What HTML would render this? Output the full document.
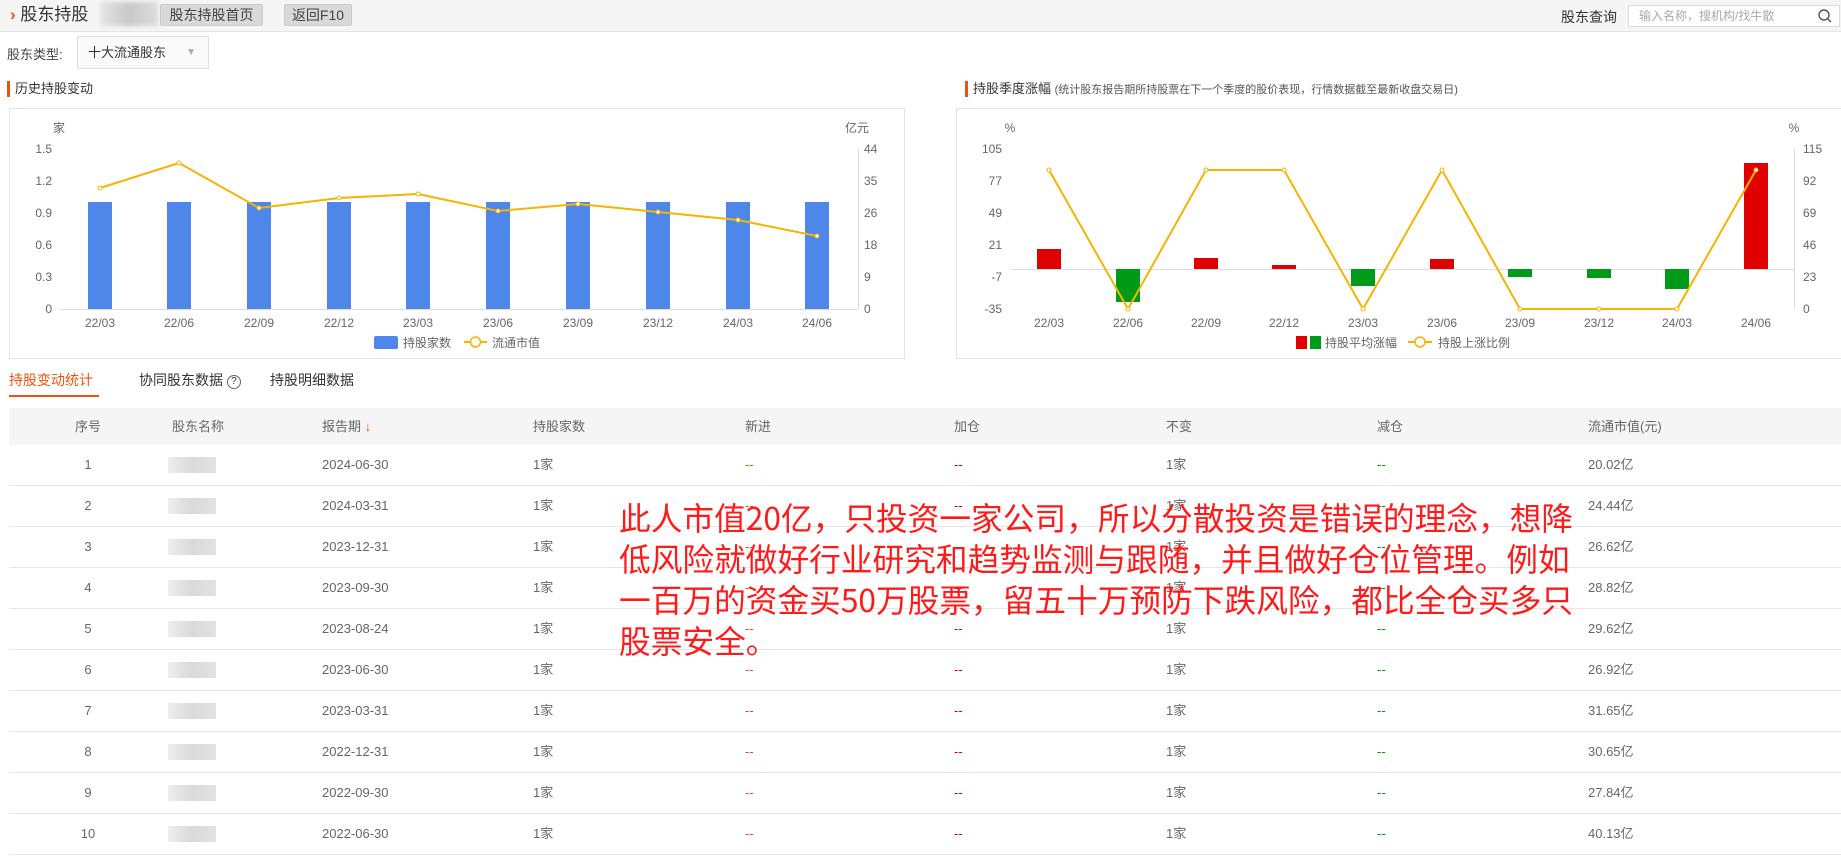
<!DOCTYPE html>
<html><head><meta charset="utf-8"><style>
*{margin:0;padding:0;box-sizing:border-box}
body{width:1841px;height:861px;position:relative;overflow:hidden;background:#fff;font-family:"Liberation Sans","Noto Sans CJK SC",sans-serif;color:#666;font-size:13px}
.a{position:absolute;white-space:nowrap}
.top{position:absolute;left:0;top:0;width:1841px;height:32px;background:#f5f5f5;border-bottom:1px solid #e4e4e4}
.btn{position:absolute;top:4px;height:22px;background:#d9d9d9;border:1px solid #ccc;border-radius:2px;color:#444;font-size:14px;line-height:20px;text-align:center}
.sec{position:absolute;top:81px;height:16px;border-left:3px solid #e8540f;padding-left:5px;font-size:13px;line-height:16px;color:#333}
.box{position:absolute;top:108px;height:251px;border:1px solid #e4e4e4}
.hdr{position:absolute;left:9px;top:408px;width:1832px;height:37px;background:#f5f5f5}
.row{position:absolute;left:9px;width:1832px;height:41px;border-bottom:1px solid #e6e6e6}
.c{position:absolute;font-size:13px;line-height:40px}
.note{position:absolute;left:619px;top:497px;color:#ff1a1a;font-size:31.7px;line-height:41px;font-family:"Noto Sans CJK SC",sans-serif;white-space:nowrap}
</style></head><body>
<div class="top"></div>
<div class="a" style="left:10px;top:5px;font-size:17px;color:#333;line-height:20px"><span style="color:#e8540f;font-weight:bold">›</span> 股东持股</div>
<div class="a" style="left:100px;top:2px;width:58px;height:24px;background:linear-gradient(90deg,#e6e6e6,#c8c8c8,#ddd);filter:blur(2px)"></div>
<div class="btn" style="left:160px;width:103px">股东持股首页</div>
<div class="btn" style="left:284px;width:68px">返回F10</div>
<div class="a" style="left:1561px;top:7px;font-size:14px;color:#333">股东查询</div>
<div class="a" style="left:1628px;top:5px;width:212px;height:22px;border:1px solid #ddd;background:#fff;font-size:12px;color:#aaa;line-height:20px;padding-left:10px">输入名称，搜机构/找牛散</div>
<svg class="a" style="left:1817px;top:8px" width="16" height="16"><circle cx="7" cy="7" r="5" fill="none" stroke="#555" stroke-width="1.4"/><line x1="11" y1="11" x2="14" y2="14" stroke="#555" stroke-width="1.4"/></svg>
<div class="a" style="left:7px;top:44px;font-size:13px;color:#444">股东类型:</div>
<div class="a" style="left:77px;top:36px;width:132px;height:33px;border:1px solid #e0e0e0;background:#fafafa;font-size:13px;color:#333;line-height:31px;padding-left:10px">十大流通股东<span style="position:absolute;right:12px;color:#aaa;font-size:10px">▼</span></div>
<div class="sec" style="left:7px">历史持股变动</div>
<div class="sec" style="left:965px">持股季度涨幅 <span style="font-size:11px;color:#555">(统计股东报告期所持股票在下一个季度的股价表现，行情数据截至最新收盘交易日)</span></div>
<div class="box" style="left:9px;width:896px"></div>
<div class="box" style="left:956px;width:885px;border-right:none"></div>
<svg class="a" style="left:0;top:0" width="1841" height="400" font-family="Liberation Sans,Noto Sans CJK SC,sans-serif" font-size="12" fill="#666">
<line x1="60" y1="309.5" x2="858" y2="309.5" stroke="#ddd"/>
<line x1="858.5" y1="149" x2="858.5" y2="309" stroke="#ddd"/>
<text x="59" y="132" text-anchor="middle">家</text><text x="857" y="132" text-anchor="middle">亿元</text>
<g text-anchor="end"><text x="52" y="153">1.5</text><text x="52" y="185">1.2</text><text x="52" y="217">0.9</text><text x="52" y="249">0.6</text><text x="52" y="281">0.3</text><text x="52" y="313">0</text></g>
<g><text x="864" y="153">44</text><text x="864" y="185">35</text><text x="864" y="217">26</text><text x="864" y="249">18</text><text x="864" y="281">9</text><text x="864" y="313">0</text></g>
<g fill="#4f86ea">
<rect x="88" y="202" width="24" height="107"/><rect x="167" y="202" width="24" height="107"/><rect x="247" y="202" width="24" height="107"/><rect x="327" y="202" width="24" height="107"/><rect x="406" y="202" width="24" height="107"/><rect x="486" y="202" width="24" height="107"/><rect x="566" y="202" width="24" height="107"/><rect x="646" y="202" width="24" height="107"/><rect x="726" y="202" width="24" height="107"/><rect x="805" y="202" width="24" height="107"/></g>
<polyline fill="none" stroke="#f5b400" stroke-width="2" points="100,188 179,163 259,208 339,198 418,194 498,211 578,204 658,212 738,220 817,236"/>
<g fill="#fff" stroke="#f5b400"><circle cx="100" cy="188" r="2"/><circle cx="179" cy="163" r="2"/><circle cx="259" cy="208" r="2"/><circle cx="339" cy="198" r="2"/><circle cx="418" cy="194" r="2"/><circle cx="498" cy="211" r="2"/><circle cx="578" cy="204" r="2"/><circle cx="658" cy="212" r="2"/><circle cx="738" cy="220" r="2"/><circle cx="817" cy="236" r="2"/></g>
<g text-anchor="middle"><text x="100" y="327">22/03</text><text x="179" y="327">22/06</text><text x="259" y="327">22/09</text><text x="339" y="327">22/12</text><text x="418" y="327">23/03</text><text x="498" y="327">23/06</text><text x="578" y="327">23/09</text><text x="658" y="327">23/12</text><text x="738" y="327">24/03</text><text x="817" y="327">24/06</text></g>
<rect x="374" y="336" width="24" height="13" rx="2" fill="#4f86ea"/><text x="403" y="347">持股家数</text>
<line x1="464" y1="342" x2="487" y2="342" stroke="#f5b400" stroke-width="2"/><circle cx="475.5" cy="342" r="5" fill="#fff" stroke="#f5b400" stroke-width="1.5"/><text x="492" y="347">流通市值</text>

<line x1="1011" y1="269.5" x2="1794" y2="269.5" stroke="#ddd"/>
<line x1="1794.5" y1="149" x2="1794.5" y2="309" stroke="#ddd"/>
<text x="1010" y="132" text-anchor="middle">%</text><text x="1794" y="132" text-anchor="middle">%</text>
<g text-anchor="end"><text x="1002" y="153">105</text><text x="1002" y="185">77</text><text x="1002" y="217">49</text><text x="1002" y="249">21</text><text x="1002" y="281">-7</text><text x="1002" y="313">-35</text></g>
<g><text x="1803" y="153">115</text><text x="1803" y="185">92</text><text x="1803" y="217">69</text><text x="1803" y="249">46</text><text x="1803" y="281">23</text><text x="1803" y="313">0</text></g>
<g fill="#e00000"><rect x="1037" y="249" width="24" height="20"/><rect x="1194" y="258" width="24" height="11"/><rect x="1272" y="265" width="24" height="4"/><rect x="1430" y="259" width="24" height="10"/><rect x="1744" y="163" width="24" height="106"/></g>
<g fill="#009a19"><rect x="1116" y="269" width="24" height="33"/><rect x="1351" y="269" width="24" height="17"/><rect x="1508" y="269" width="24" height="8"/><rect x="1587" y="269" width="24" height="9"/><rect x="1665" y="269" width="24" height="20"/></g>
<polyline fill="none" stroke="#f5b400" stroke-width="2" points="1049,170 1128,309 1206,170 1284,170 1363,309 1442,170 1520,309 1599,309 1677,309 1756,170"/>
<g fill="#fff" stroke="#f5b400"><circle cx="1049" cy="170" r="2"/><circle cx="1128" cy="309" r="2"/><circle cx="1206" cy="170" r="2"/><circle cx="1284" cy="170" r="2"/><circle cx="1363" cy="309" r="2"/><circle cx="1442" cy="170" r="2"/><circle cx="1520" cy="309" r="2"/><circle cx="1599" cy="309" r="2"/><circle cx="1677" cy="309" r="2"/><circle cx="1756" cy="170" r="2"/></g>
<g text-anchor="middle"><text x="1049" y="327">22/03</text><text x="1128" y="327">22/06</text><text x="1206" y="327">22/09</text><text x="1284" y="327">22/12</text><text x="1363" y="327">23/03</text><text x="1442" y="327">23/06</text><text x="1520" y="327">23/09</text><text x="1599" y="327">23/12</text><text x="1677" y="327">24/03</text><text x="1756" y="327">24/06</text></g>
<rect x="1296" y="336" width="11" height="13" fill="#e00000"/><rect x="1310" y="336" width="11" height="13" fill="#009a19"/><text x="1325" y="347">持股平均涨幅</text>
<line x1="1408" y1="342" x2="1432" y2="342" stroke="#f5b400" stroke-width="2"/><circle cx="1420" cy="342" r="5" fill="#fff" stroke="#f5b400" stroke-width="1.5"/><text x="1438" y="347">持股上涨比例</text>
</svg>
<div class="a" style="left:9px;top:370px;font-size:14px;color:#e8540f">持股变动统计</div>
<div class="a" style="left:9px;top:395px;width:90px;height:2px;background:#e8540f"></div>
<div class="a" style="left:139px;top:370px;font-size:14px;color:#333">协同股东数据 <span style="display:inline-block;width:14px;height:14px;border:1px solid #666;border-radius:50%;font-size:10px;line-height:12px;text-align:center;vertical-align:1px">?</span></div>
<div class="a" style="left:270px;top:370px;font-size:14px;color:#333">持股明细数据</div>
<div class="hdr">
<div class="c" style="left:66px;line-height:37px">序号</div><div class="c" style="left:163px;line-height:37px">股东名称</div>
<div class="c" style="left:313px;line-height:37px">报告期 <span style="color:#e8540f">↓</span></div><div class="c" style="left:524px;line-height:37px">持股家数</div>
<div class="c" style="left:736px;line-height:37px">新进</div><div class="c" style="left:945px;line-height:37px">加仓</div>
<div class="c" style="left:1157px;line-height:37px">不变</div><div class="c" style="left:1368px;line-height:37px">减仓</div>
<div class="c" style="left:1579px;line-height:37px">流通市值(元)</div></div>
<div id="rows"></div>
<script>
var d=[["2024-06-30","20.02亿"],["2024-03-31","24.44亿"],["2023-12-31","26.62亿"],["2023-09-30","28.82亿"],["2023-08-24","29.62亿"],["2023-06-30","26.92亿"],["2023-03-31","31.65亿"],["2022-12-31","30.65亿"],["2022-09-30","27.84亿"],["2022-06-30","40.13亿"]];
var h="";for(var i=0;i<10;i++){var t=445+i*41;
h+='<div class="row" style="top:'+t+'px"><div class="c" style="left:0;width:158px;text-align:center">'+(i+1)+'</div><div style="position:absolute;left:159px;top:12px;width:48px;height:16px;background:linear-gradient(90deg,#eee,#d9d9d9,#e3e3e3)"></div><div class="c" style="left:313px">'+d[i][0]+'</div><div class="c" style="left:524px">1家</div><div class="c" style="left:736px;color:#e8540f">--</div><div class="c" style="left:945px;color:#d00">--</div><div class="c" style="left:1157px">1家</div><div class="c" style="left:1368px;color:#090">--</div><div class="c" style="left:1579px">'+d[i][1]+'</div></div>';}
document.getElementById("rows").innerHTML=h;
</script>
<div class="note">此人市值20亿，只投资一家公司，所以分散投资是错误的理念，想降<br>低风险就做好行业研究和趋势监测与跟随，并且做好仓位管理。例如<br>一百万的资金买50万股票，留五十万预防下跌风险，都比全仓买多只<br>股票安全。</div>
</body></html>
